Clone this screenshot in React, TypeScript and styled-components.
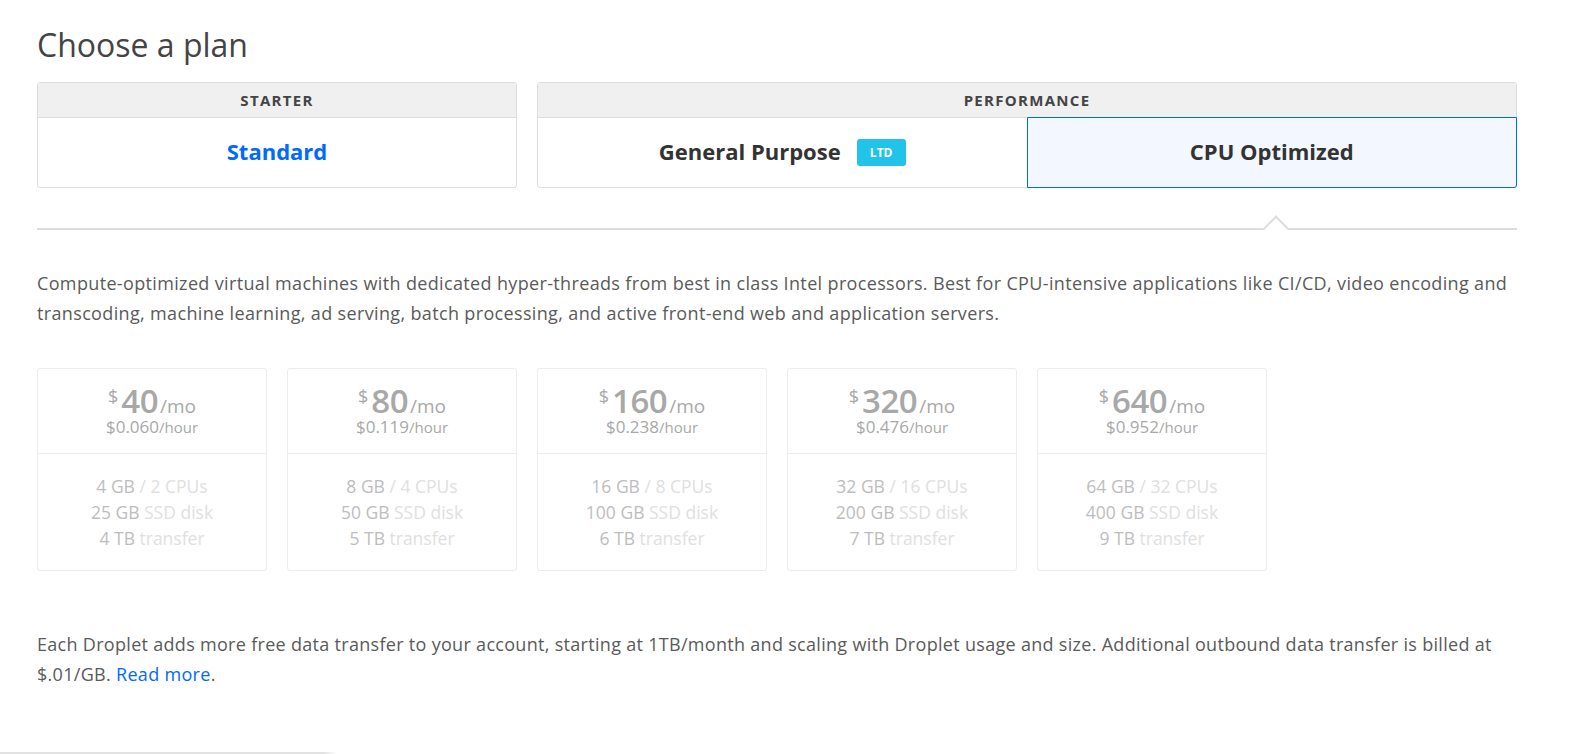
import React from 'react';
import styled, { createGlobalStyle } from 'styled-components';

const blue = '#0069ff';
const line = '#dddddd';

const GlobalStyle = createGlobalStyle`
  body {
    margin: 0;
    background: #ffffff;
    font-family: "Open Sans", "Liberation Sans", sans-serif;
    color: #5a5a5a;
  }
`;

const Page = styled.div`
  width: 1480px;
  padding: 0 37px;
`;

const Title = styled.h1`
  margin: 0;
  padding-top: 25px;
  font-size: 32px;
  line-height: 40px;
  font-weight: 400;
  color: #444;
`;

const TabGrid = styled.div`
  display: grid;
  grid-template-columns: repeat(3, 1fr);
  gap: 20px;
  margin-top: 17px;
`;

const Group = styled.div<{ $span: number }>`
  grid-column: span ${(p) => p.$span};
  border: 1px solid ${line};
  border-radius: 3px;
  display: flex;
  flex-direction: column;
`;

const GroupHeader = styled.div`
  height: 34px;
  display: flex;
  align-items: center;
  justify-content: center;
  background: #f0f0f0;
  border-bottom: 1px solid ${line};
  border-radius: 3px 3px 0 0;
  font-size: 15px;
  font-weight: 700;
  letter-spacing: 1.3px;
  text-transform: uppercase;
  color: #444;
`;

const Options = styled.div`
  display: flex;
  height: 69px;
`;

const Option = styled.div<{ $selected?: boolean; $link?: boolean }>`
  flex: 1;
  display: flex;
  align-items: center;
  justify-content: center;
  gap: 16px;
  padding-bottom: 3px;
  font-size: 22px;
  font-weight: 700;
  color: ${(p) => (p.$link ? blue : '#333')};
  background: ${(p) => (p.$selected ? '#f3f7ff' : 'transparent')};
  border: ${(p) => (p.$selected ? `1px solid ${blue}` : 'none')};
  margin: ${(p) => (p.$selected ? '-1px -1px -1px 0' : '0')};
  border-radius: ${(p) => (p.$selected ? '0 0 3px 0' : '0')};
`;

const Badge = styled.span`
  display: inline-flex;
  align-items: center;
  justify-content: center;
  width: 49px;
  height: 27px;
  margin-top: 3px;
  border-radius: 3px;
  background: #22c3e9;
  color: #fff;
  font-size: 12px;
  font-weight: 700;
`;

const Divider = styled.div`
  position: relative;
  height: 2px;
  background: ${line};
  margin-top: 40px;
`;

const Caret = styled.span`
  position: absolute;
  right: 232px;
  top: -9px;
  width: 18px;
  height: 18px;
  background: #fff;
  border-top: 2px solid ${line};
  border-left: 2px solid ${line};
  transform: rotate(45deg);
  box-sizing: border-box;
`;

const Text = styled.p<{ $gap: number; $spacing: number }>`
  margin: ${(p) => p.$gap}px 0 0;
  font-size: 18px;
  letter-spacing: ${(p) => p.$spacing}px;
  line-height: 30px;
  color: #5a5a5a;
`;

const Link = styled.a`
  color: ${blue};
  text-decoration: none;
`;

const Cards = styled.div`
  display: flex;
  gap: 20px;
  margin-top: 40px;
`;

const Card = styled.div`
  width: 230px;
  height: 203px;
  box-sizing: border-box;
  border: 1px solid #ececec;
  border-radius: 3px;
  display: flex;
  flex-direction: column;
`;

const CardTop = styled.div`
  height: 85px;
  border-bottom: 1px solid #ececec;
  display: flex;
  flex-direction: column;
  align-items: center;
  padding-top: 17px;
  box-sizing: border-box;
  color: #a8a8a8;
`;

const PriceRow = styled.div`
  display: flex;
  align-items: baseline;
  height: 30px;
  line-height: 30px;
`;

const Dollar = styled.span`
  font-size: 18px;
  align-self: flex-start;
  line-height: 20px;
  margin-right: 3px;
`;

const Amount = styled.span`
  font-size: 33px;
  font-weight: 600;
  letter-spacing: -0.5px;
`;

const Per = styled.span`
  font-size: 19px;
  margin-left: 2px;
`;

const Hourly = styled.div`
  margin-top: 1px;
  font-size: 17px;
  line-height: 20px;
`;

const Unit = styled.span`
  font-size: 15px;
`;

const Specs = styled.div`
  flex: 1;
  display: flex;
  flex-direction: column;
  align-items: center;
  justify-content: center;
  font-size: 17.5px;
  line-height: 26px;
  color: #bdbdbd;
`;

const Dim = styled.span`
  color: #e0e0e0;
`;

const FooterRule = styled.div`
  width: 337px;
  height: 2px;
  margin: 63px 0 0 -37px;
  background: linear-gradient(to right, #e2e2e2 96%, #ffffff);
`;

const plans = [
  { mo: 40, hr: '0.060', ram: 4, cpu: 2, disk: 25, tb: 4 },
  { mo: 80, hr: '0.119', ram: 8, cpu: 4, disk: 50, tb: 5 },
  { mo: 160, hr: '0.238', ram: 16, cpu: 8, disk: 100, tb: 6 },
  { mo: 320, hr: '0.476', ram: 32, cpu: 16, disk: 200, tb: 7 },
  { mo: 640, hr: '0.952', ram: 64, cpu: 32, disk: 400, tb: 9 },
];

function App() {
  return (
    <Page>
      <GlobalStyle />
      <Title>Choose a plan</Title>
      <TabGrid>
        <Group $span={1}>
          <GroupHeader>Starter</GroupHeader>
          <Options>
            <Option $link>Standard</Option>
          </Options>
        </Group>
        <Group $span={2}>
          <GroupHeader>Performance</GroupHeader>
          <Options>
            <Option>
              General Purpose <Badge>LTD</Badge>
            </Option>
            <Option $selected>CPU Optimized</Option>
          </Options>
        </Group>
      </TabGrid>
      <Divider>
        <Caret />
      </Divider>
      <Text $gap={38} $spacing={0.35}>
        Compute-optimized virtual machines with dedicated hyper-threads from best in class Intel
        processors. Best for CPU-intensive applications like CI/CD, video encoding and transcoding,
        machine learning, ad serving, batch processing, and active front-end web and application
        servers.
      </Text>
      <Cards>
        {plans.map((p) => (
          <Card key={p.mo}>
            <CardTop>
              <PriceRow>
                <Dollar>$</Dollar>
                <Amount>{p.mo}</Amount>
                <Per>/mo</Per>
              </PriceRow>
              <Hourly>
                ${p.hr}
                <Unit>/hour</Unit>
              </Hourly>
            </CardTop>
            <Specs>
              <div>
                {p.ram} GB <Dim>/ {p.cpu} CPUs</Dim>
              </div>
              <div>
                {p.disk} GB <Dim>SSD disk</Dim>
              </div>
              <div>
                {p.tb} TB <Dim>transfer</Dim>
              </div>
            </Specs>
          </Card>
        ))}
      </Cards>
      <Text $gap={58} $spacing={0.3}>
        Each Droplet adds more free data transfer to your account, starting at 1TB/month and scaling
        with Droplet usage and size. Additional outbound data transfer is billed at $.01/GB.{' '}
        <Link href="#">Read more</Link>.
      </Text>
      <FooterRule />
    </Page>
  );
}

export default App;
